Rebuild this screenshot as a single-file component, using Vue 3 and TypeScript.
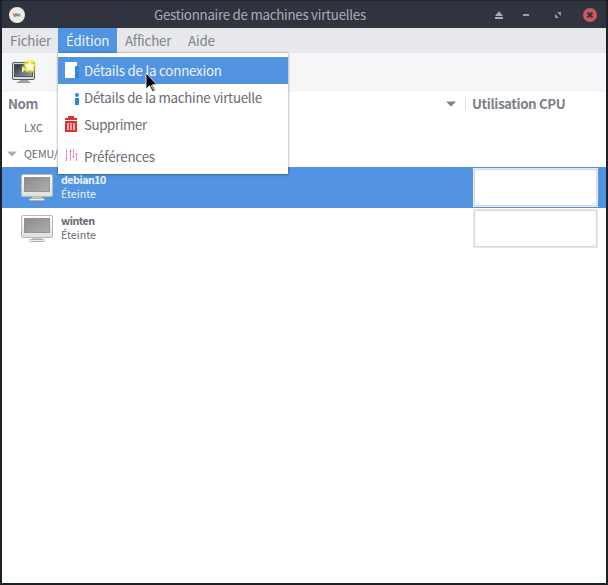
<script setup lang="ts">
interface Machine {
  name: string
  state: string
  selected: boolean
}

const machines: Machine[] = [
  { name: 'debian10', state: 'Éteinte', selected: true },
  { name: 'winten', state: 'Éteinte', selected: false },
]
const menus: string[] = ['Fichier', 'Édition', 'Afficher', 'Aide']
const activeMenu = 'Édition'
</script>

<template>
  <div class="window">
    <header class="titlebar">
      <svg class="app-logo" width="16" height="16" viewBox="0 0 16 16">
        <circle cx="8" cy="8" r="8" fill="#ece9e6" />
        <path d="M4.2 6.2 5.7 9.3 7 6.2" fill="none" stroke="#a66a72" stroke-width="1.1" />
        <path d="M7 9.5 8 6.6 9.3 9.4 10.2 6.7 11.5 9.4" fill="none" stroke="#777879" stroke-width="1" />
      </svg>
      <h1 class="title">Gestionnaire de machines virtuelles</h1>
      <div class="controls">
        <svg width="14" height="14" viewBox="0 0 14 14"><path d="M7 3.3 11 8H3zM3 9h8v2H3z" fill="#a9adb7" /></svg>
        <svg width="14" height="14" viewBox="0 0 14 14"><path d="M4 6h6v2H4z" fill="#9ca1ad" /></svg>
        <svg width="14" height="14" viewBox="0 0 14 14"><path d="M6 4h4v4zM4 6v4h4z" fill="#9398a4" /></svg>
        <svg width="14" height="14" viewBox="0 0 14 14">
          <circle cx="7" cy="7" r="7" fill="#cc575d" />
          <path d="m4.5 4.5 5 5m0-5-5 5" stroke="#2f343f" stroke-width="2" />
        </svg>
      </div>
    </header>

    <nav class="menubar">
      <div v-for="menu in menus" :key="menu" class="menu" :class="{ active: menu === activeMenu }">
        <span>{{ menu }}</span>
        <div v-if="menu === activeMenu" class="dropdown">
          <div class="item hover">
            <svg width="15" height="17" viewBox="0 0 15 17">
              <path d="M0 0h12v4h-2v5h2v7H0z" fill="#fff" />
              <circle cx="12" cy="6" r="2" fill="#268bd2" /><path d="M10 9h4v7h-4z" fill="#268bd2" />
            </svg>
            <span class="connection-details">Détails de la connexion</span>
          </div>
          <div class="item">
            <svg width="15" height="17" viewBox="0 0 15 17">
              <circle cx="12" cy="6" r="2" fill="#268bd2" /><path d="M10 9h4v7h-4z" fill="#268bd2" />
            </svg>
            <span>Détails de la machine virtuelle</span>
          </div>
          <div class="item">
            <svg width="15" height="17" viewBox="0 0 15 17">
              <path d="M0 2h3V0h6v2h3v2H0z" fill="#dc322f" />
              <path d="M0 5h12v11H0z" fill="#dc322f" />
              <path d="M2 7h2v7H2zM5 7h2v7H5zM8 7h2v7H8z" fill="#f0aaa8" />
            </svg>
            <span class="remove">Supprimer</span>
          </div>
          <div class="item preferences">
            <svg width="15" height="17" viewBox="0 0 15 17">
              <path d="M1.5 1v12M5.5 1v12M8.5 1v9M11.5 5v8" fill="none" stroke="#eb8fb5" />
              <path d="M0 10h3l-1.5 2zM4 4h3L5.5 2zM7 8h3l-1.5 2zM10 7h3l-1.5-2z" fill="#eb8fb5" />
            </svg>
            <span class="prefs">Préférences</span>
          </div>
        </div>
      </div>
    </nav>

    <div class="toolbar">
      <svg width="25" height="24" viewBox="0 0 25 24">
        <defs>
          <linearGradient id="screen" x2="1" y2="1"><stop stop-color="#252e38" /><stop offset="1" stop-color="#9aa5b4" /></linearGradient>
          <filter id="glow" x="-50%" y="-50%" width="200%" height="200%"><feGaussianBlur stdDeviation="1" /></filter>
        </defs>
        <rect x="1.5" y="2.5" width="22" height="17" rx="1.5" fill="#dadbd8" stroke="#555a5d" />
        <rect x="3.5" y="4.5" width="18" height="12" fill="url(#screen)" stroke="#4b5664" />
        <path d="M9 20h8l1 2H8z" fill="#aaa" /><path d="M6 22.2h13" stroke="#777" />
        <path d="m11 6 4 3-4 4z" fill="#e5e7e8" />
        <rect x="13" y="1" width="11" height="11" rx="4" fill="#eee600" filter="url(#glow)" />
        <path d="m19 1 1.6 3.2 3.7.6-2.6 2.6.6 4-3.6-1.8-3.5 1.8.7-4-2.8-2.7 3.9-.5z" fill="#fffde0" />
      </svg>
    </div>

    <main>
      <div class="columns">
        <span class="name-heading">Nom</span>
        <svg class="sort" width="10" height="6" viewBox="0 0 10 6"><path d="M0 .5h10L5 5.5z" fill="#7a7f8b" /></svg>
        <div class="cpu-heading"><span>Utilisation CPU</span></div>
      </div>
      <div class="connection"><span>LXC</span></div>
      <div class="connection expanded">
        <svg width="10" height="6" viewBox="0 0 10 6"><path d="M0 .5h10L5 5.5z" fill="#a9abad" /></svg>
        <span>QEMU/KVM</span>
      </div>
      <div v-for="machine in machines" :key="machine.name" class="machine" :class="{ selected: machine.selected }">
        <svg class="monitor" width="32" height="28" viewBox="0 0 32 28">
          <defs>
            <linearGradient id="display" x2="1" y2="1"><stop stop-color="#8c8c8c" /><stop offset="1" stop-color="#aeaeae" /></linearGradient>
            <linearGradient id="bezel" x2="0" y2="1"><stop stop-color="#fff" /><stop offset="1" stop-color="#dededc" /></linearGradient>
          </defs>
          <rect x=".5" y=".5" width="31" height="22" rx="1.5" fill="url(#bezel)" stroke="#b8b8b5" />
          <rect x="3.5" y="3.5" width="25" height="14" fill="url(#display)" stroke="#939390" />
          <path d="M11 23h10v2H11z" fill="#cacac8" />
          <rect x="8.5" y="24.5" width="15" height="2" rx="1" fill="#f1f1ef" stroke="#b1b1ae" />
        </svg>
        <div class="machine-text">
          <strong>{{ machine.name }}</strong>
          <span>{{ machine.state }}</span>
        </div>
        <svg class="graph" width="125" height="39" viewBox="0 0 125 39">
          <rect x=".5" y=".5" width="124" height="38" fill="#fff" stroke="#ece9e9" />
          <rect x="1.5" y="1.5" width="122" height="36" fill="#fff" stroke="#d8d6d9" />
          <path d="M3 35.5h3M119 35.5h3" stroke="#dceaea" />
        </svg>
      </div>
    </main>

    <svg class="pointer" width="15" height="21" viewBox="0 0 15 21">
      <path d="M2 1v16l3.5-3.3 3 6 3-1.5-3-5.5H13z" fill="#000" stroke="#fff" stroke-width=".8" />
      <path d="m6.5 13.5 3 5.5 1.5-.8-3-5.3" fill="#aaa" />
    </svg>
  </div>
</template>

<style>
html, body { margin: 0; }
</style>

<style scoped>
* { box-sizing: border-box; }
svg { display: block; flex: none; }
.window {
  position: relative;
  width: 608px;
  height: 585px;
  overflow: hidden;
  display: flex;
  flex-direction: column;
  border: solid #1d2029;
  border-width: 0 2px 2px;
  background: #fff;
  color: #666a74;
  font: 13.33px/20px "Noto Sans CJK SC", "Noto Sans", sans-serif;
  letter-spacing: -0.27px;
}
.titlebar {
  flex: none;
  height: 28px;
  display: grid;
  grid-template-columns: 152px 1fr auto;
  align-items: center;
  background: #2f343f;
  border-top: 1px solid #22262f;
  color: #a9afbc;
}
.app-logo { margin-left: 7px; }
.title { margin: 0; font-size: 13.33px; font-weight: 400; white-space: nowrap; }
.controls { display: flex; margin-right: 9px; }
.controls svg:nth-child(1) { margin-right: 13px; }
.controls svg:nth-child(2) { margin-right: 18px; }
.controls svg:nth-child(3) { margin-right: 18px; }
.menubar {
  flex: none;
  height: 25px;
  display: grid;
  grid-template-columns: 56px 59px 63px 42px;
  background: #e7e8eb;
  color: #7c818c;
}
.menu { position: relative; padding: 3px 8px 0; white-space: nowrap; }
.menu > span { letter-spacing: -0.18px; }
.menu.active { background: #5294e2; color: #eef4fc; }
.dropdown {
  position: absolute;
  z-index: 2;
  top: 25px;
  left: 0;
  width: 230px;
  height: 121px;
  padding-top: 4px;
  background: #fff;
  color: #666a74;
  box-shadow: 0 0 2px #0005, 0 1px 3px #0003;
}
.item { height: 27px; padding: 0 7px; display: flex; align-items: center; gap: 4px; }
.item .connection-details { letter-spacing: -0.22px; }
.item .remove { letter-spacing: -0.4px; }
.item .prefs { letter-spacing: -0.2px; }
.hover { background: #5294e2; color: #eef4fc; }
.preferences { margin-top: 5px; }
.toolbar { flex: none; height: 39px; padding: 7px 9px; background: #f5f6f7; }
main { flex: 1; background: #fff; }
.columns {
  height: 23px;
  display: grid;
  grid-template-columns: 444px 19px 1fr;
  align-items: center;
  color: #7c818c;
  font-weight: 700;
  letter-spacing: -0.4px;
}
.name-heading { padding-left: 6px; }
.cpu-heading { height: 13px; border-left: 1px solid #dcdfe3; display: flex; align-items: center; padding-left: 6px; white-space: nowrap; }
.connection { height: 26px; display: flex; align-items: center; padding-left: 22px; font-size: 10.67px; letter-spacing: 0.2px; }
.expanded { padding-left: 5px; gap: 7px; letter-spacing: -0.1px; }
.machine { height: 41px; display: flex; padding-left: 19px; }
.selected { background: #5294e2; color: #edf4fc; }
.monitor { margin: 7px 8px 0 0; }
.machine-text { width: 412px; padding-top: 6px; font-size: 10.67px; line-height: 14px; display: flex; flex-direction: column; align-items: flex-start; letter-spacing: 0; }
.machine-text strong { letter-spacing: -0.5px; }
.graph { margin-top: 1px; }
.pointer { position: absolute; z-index: 5; left: 142px; top: 72px; }
</style>
